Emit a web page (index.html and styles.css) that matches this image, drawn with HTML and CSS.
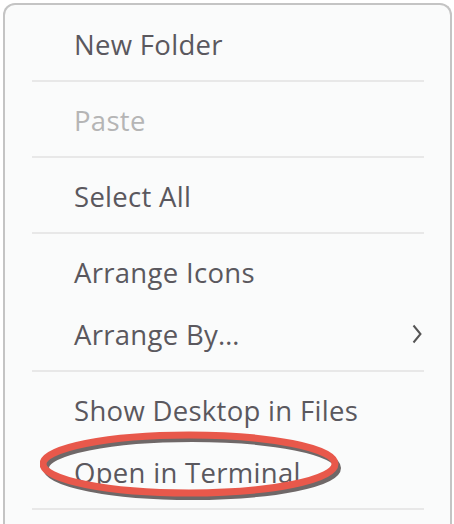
FILE: index.html
```html
<!DOCTYPE html>
<html>
<head>
<meta charset="utf-8">
<link rel="stylesheet" href="styles.css">
</head>
<body>
<div class="menu">
  <div class="item">New Folder</div>
  <div class="sep"></div>
  <div class="item disabled">Paste</div>
  <div class="sep"></div>
  <div class="item">Select All</div>
  <div class="sep"></div>
  <div class="item">Arrange Icons</div>
  <div class="item">Arrange By…
    <svg class="chev" width="10" height="20" viewBox="0 0 10 20"><path d="M1.5 1.5 L8.5 10 L1.5 18.5" fill="none" stroke="#555" stroke-width="2"/></svg>
  </div>
  <div class="sep"></div>
  <div class="item">Show Desktop in Files</div>
  <div class="item">Open in Terminal</div>
  <div class="sep"></div>
  <svg class="ring" width="320" height="80" viewBox="0 0 320 80">
    <ellipse cx="152" cy="39" rx="146" ry="29" fill="none" stroke="#6f6868" stroke-width="6"/>
    <ellipse cx="149" cy="35" rx="146" ry="29" fill="none" stroke="#e8584b" stroke-width="7"/>
  </svg>
</div>
</body>
</html>
```
FILE: styles.css
```css
html, body {
  margin: 0;
  padding: 0;
  background: #ffffff;
}
body {
  padding: 3px 2px 0 3px;
  height: 524px;
  overflow: hidden;
  box-sizing: border-box;
}
.menu {
  position: relative;
  box-sizing: border-box;
  background: #fafbfb;
  border: 2px solid #c4c4c4;
  border-bottom: none;
  border-radius: 12px 12px 0 0;
  padding-top: 8px;
  height: 100%;
  overflow: hidden;
  font-family: "Open Sans", "Noto Sans", sans-serif;
  font-size: 27.5px;
  letter-spacing: 0.3px;
  color: #5a585e;
}
.item {
  height: 62px;
  display: flex;
  align-items: center;
  padding-left: 69px;
  padding-right: 28px;
  justify-content: space-between;
}
.item.disabled {
  color: #b5b5b5;
}
.sep {
  height: 2px;
  background: #e8e8e8;
  margin: 5px 26px 7px 27px;
}
.ring {
  position: absolute;
  left: 35px;
  top: 424px;
}
```
